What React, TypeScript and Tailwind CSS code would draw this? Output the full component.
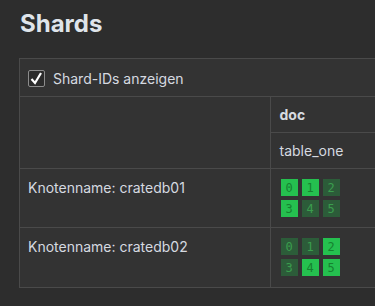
import React from 'react';

const nodes = [
  { name: 'cratedb01', shards: [true, true, false, true, false, false] },
  { name: 'cratedb02', shards: [false, false, true, false, true, true] },
];

function Shard({ id, primary }: { id: number; primary: boolean }) {
  return (
    <div
      className={`w-[17px] h-[17px] flex items-center justify-center text-[12px] leading-none ${
        primary ? 'bg-[#25c04f] text-[#15822f]' : 'bg-[#2c5c39] text-[#3b9c4e]'
      }`}
      style={{ fontFamily: '"DejaVu Sans Mono", monospace' }}
    >
      {id}
    </div>
  );
}

export default function App() {
  return (
    <div
      className="w-[375px] h-[306px] overflow-hidden bg-[#2d2d2d] text-[#d6dae0] text-[14px]"
      style={{ fontFamily: 'Inter, "Noto Sans", sans-serif' }}
    >
      <div className="pl-[19px] pt-[10px]">
        <h1 className="text-[24px] font-bold leading-[28px] text-[#dfe4ea] pl-[1px]">Shards</h1>
        <div className="mt-[20px] w-[420px] border border-[#4a4a4a] bg-[#333333]">
          <div className="h-[37px] flex items-center gap-[8px] pl-[8px] pt-[1px]">
            <div className="w-[17px] h-[17px] rounded-[2px] border border-[#8c8c8c] bg-[#2b2b2b] flex items-center justify-center">
              <svg width="15" height="15" viewBox="0 0 15 15">
                <path d="M2.5 8 L6 12 L12 2" fill="none" stroke="#ffffff" strokeWidth="2.2" />
              </svg>
            </div>
            <span>Shard-IDs anzeigen</span>
          </div>
          <table className="w-full border-collapse">
            <tbody>
              <tr className="h-[36px]">
                <td rowSpan={2} className="w-[250px] border-t border-r border-[#4a4a4a]"></td>
                <td className="border-t border-[#4a4a4a] px-[9px] font-bold">doc</td>
              </tr>
              <tr className="h-[36px]">
                <td className="border-t border-[#4a4a4a] px-[9px]">table_one</td>
              </tr>
              {nodes.map((n) => (
                <tr key={n.name} className="h-[59px]">
                  <td className="border-t border-r border-[#4a4a4a] align-top pl-[8px] pt-[8px]">
                    Knotenname: {n.name}
                  </td>
                  <td className="border-t border-[#4a4a4a] align-top pl-[10px] pt-[10px]">
                    <div className="grid grid-cols-[repeat(3,17px)] gap-[4px]">
                      {n.shards.map((p, i) => (
                        <Shard key={i} id={i} primary={p} />
                      ))}
                    </div>
                  </td>
                </tr>
              ))}
            </tbody>
          </table>
        </div>
      </div>
    </div>
  );
}
